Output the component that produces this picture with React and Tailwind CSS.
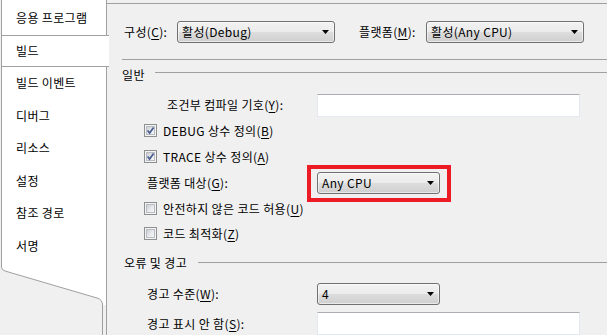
import React from "react";

const FONT = { fontFamily: '"Noto Sans CJK KR", "Noto Sans", sans-serif' };

function Arrow() {
  return (
    <svg width="7" height="4" viewBox="0 0 7 4" className="shrink-0">
      <path d="M0 0 H7 L3.5 4 Z" fill="#000" />
    </svg>
  );
}

function Combo({ text, w }) {
  return (
    <div
      className={`${w} h-[22px] flex items-center justify-between pl-[4px] pr-[5px] rounded-[3px] border border-[#707070] bg-[linear-gradient(to_bottom,#f2f2f2_0%,#ebebeb_50%,#dddddd_50%,#cfcfcf_100%)] shadow-[inset_0_0_0_1px_rgba(255,255,255,0.55)] text-[12px] leading-none`}
    >
      <span className="-mt-px">{text}</span>
      <Arrow />
    </div>
  );
}

function Input({ h = "h-[23px]" }) {
  return (
    <div className={`w-[263px] ${h} bg-white border border-[#e3e9ef] border-t-[#abadb3]`} />
  );
}

function Check({ checked, children }) {
  return (
    <div className="flex items-center h-[26px] pl-[37px]">
      <div className="w-[13px] h-[13px] border border-[#8e8f8f] bg-[#f4f4f4] p-px shrink-0">
        <div className="relative w-full h-full border border-[#b8bcc2] bg-[linear-gradient(135deg,#cbcfd5_0%,#e6e8eb_50%,#f7f7f7_100%)]">
          {checked && (
            <svg width="11" height="11" viewBox="0 0 11 11" className="absolute left-[-2px] top-[-2px]">
              <path d="M2.6 5.4 L4.6 8 L8.6 2.4" fill="none" stroke="#4a5d8f" strokeWidth="1.7" />
            </svg>
          )}
        </div>
      </div>
      <span className="ml-[6px] text-[12px] leading-[16px]">{children}</span>
    </div>
  );
}

function U({ children }) {
  return <span className="underline underline-offset-[2px] decoration-[1px]">{children}</span>;
}

const tabs = ["빌드 이벤트", "디버그", "리소스", "설정", "참조 경로", "서명"];

export default function App() {
  return (
    <div className="w-[607px] h-[335px] bg-[#f0f0f0] overflow-hidden flex text-black tracking-[0.35px]" style={FONT}>
      {/* left tab strip */}
      <div className="w-[107px] shrink-0 flex flex-col">
        <div className="ml-px border-l border-[#a0a0a0] bg-white flex flex-col">
          <div className="h-[35px] flex items-center pl-[14px] text-[12px] border-r border-[#a0a0a0]">
            응용 프로그램
          </div>
          <div className="relative z-10 w-[107px] h-[32px] flex items-center pl-[14px] text-[12px] bg-white border-t border-b border-[#a0a0a0]">
            빌드
          </div>
          {tabs.map((t) => (
            <div key={t} className="h-[32.5px] flex items-center pl-[14px] text-[12px] border-r border-[#a0a0a0]">
              {t}
            </div>
          ))}
        </div>
        <div className="flex-1 relative">
          <svg width="107" height="80" viewBox="0 0 107 80" className="block">
            <path d="M1.5 0 V5 Q1.5 8 5 9 L97 36 Q102.5 37.5 102.5 43 L106 43 L106 0 Z" fill="#fff" />
            <path d="M1.5 0 V5 Q1.5 8 5 9 L97 36 Q102.5 37.5 102.5 43 V80" fill="none" stroke="#a0a0a0" strokeWidth="1" />
            <path d="M106.5 0 V80" fill="none" stroke="#a0a0a0" strokeWidth="1" />
          </svg>
        </div>
      </div>

      {/* main panel */}
      <div className="flex-1 mt-[3px] border-t border-[#a0a0a0] flex flex-col text-[12px]">
        {/* top row */}
        <div className="mt-[17px] h-[22px] flex items-center pl-[17px]">
          <div className="w-[53px] leading-[16px]">
            구성(<U>C</U>):
          </div>
          <Combo text="활성(Debug)" w="w-[158px]" />
          <div className="ml-[24px] w-[67px] leading-[16px]">
            플랫폼(<U>M</U>):
          </div>
          <Combo text="활성(Any CPU)" w="w-[158px]" />
        </div>

        <div className="mt-[16px] ml-[15px] h-px bg-[#a0a0a0]" />

        {/* 일반 */}
        <div className="mt-[7px] flex pl-[15px]">
          <span className="leading-[16px]">일반</span>
          <div className="ml-[10px] mt-[5px] h-px flex-1 bg-[#a0a0a0]" />
        </div>

        <div className="mt-[11px] flex items-center pl-[60px]">
          <div className="w-[150px] leading-[16px]">
            조건부 컴파일 기호(<U>Y</U>):
          </div>
          <Input />
        </div>

        <div className="mt-px">
          <Check checked>
            DEBUG 상수 정의(<U>B</U>)
          </Check>
          <Check checked>
            TRACE 상수 정의(<U>A</U>)
          </Check>
        </div>

        <div className="h-[28px] flex items-center pl-[40px]">
          <div className="w-[170px] leading-[16px]">
            플랫폼 대상(<U>G</U>):
          </div>
          <div className="relative">
            <Combo text="Any CPU" w="w-[123px]" />
            <span className="absolute left-[-10px] right-[-11px] top-[-7px] bottom-[-8px] border-[4px] border-[#ed1c24] pointer-events-none" />
          </div>
        </div>

        <Check>
          안전하지 않은 코드 허용(<U>U</U>)
        </Check>
        <Check>
          코드 최적화(<U>Z</U>)
        </Check>

        {/* 오류 및 경고 */}
        <div className="mt-[9px] flex pl-[17px]">
          <span className="leading-[16px]">오류 및 경고</span>
          <div className="ml-[11px] mt-[7px] h-px flex-1 bg-[#a0a0a0]" />
        </div>

        <div className="mt-[12px] h-[22px] flex items-center pl-[40px]">
          <div className="w-[170px] leading-[16px]">
            경고 수준(<U>W</U>):
          </div>
          <Combo text="4" w="w-[123px]" />
        </div>

        <div className="mt-[7px] flex items-center pl-[40px]">
          <div className="w-[170px] leading-[16px]">
            경고 표시 안 함(<U>S</U>):
          </div>
          <Input />
        </div>
      </div>
    </div>
  );
}
